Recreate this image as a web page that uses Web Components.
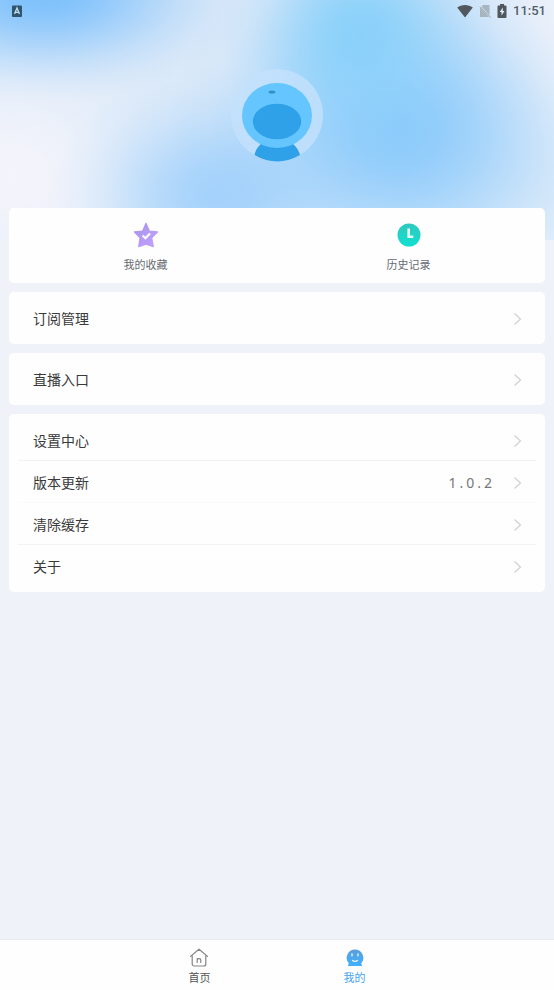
<!DOCTYPE html>
<html lang="zh-CN">
<head>
<meta charset="utf-8">
<meta name="viewport" content="width=device-width, initial-scale=1">
<title>我的</title>
<style>
  body { margin: 0; font-family: "Noto Sans", "Noto Sans CJK SC", sans-serif; color: #3c3c3c; }
</style>
</head>
<body>
<mine-page>
  <status-bar slot="status" time="11:51"></status-bar>
  <user-avatar slot="avatar"></user-avatar>
  <menu-card class="shortcuts">
    <shortcut-item label="我的收藏">
      <svg width="26" height="26" viewBox="0 0 26 26" aria-hidden="true">
        <defs><linearGradient id="sg" x1="0" y1="0" x2="1" y2="1"><stop offset="0" stop-color="#a695e8"/><stop offset="1" stop-color="#c3a0ff"/></linearGradient></defs>
        <path d="M13 1.5 16.4 9.2 24.5 10 18.6 15.7 20.2 24.5 13 22 5.8 24.5 7.2 15.7 1.5 10 9.6 9.2Z" fill="url(#sg)" stroke="url(#sg)" stroke-width="1.4" stroke-linejoin="round"/>
        <path d="m9.600 13.500 2.800 2.700 4.600-4.800" fill="none" stroke="#fff" stroke-width="2.200"/>
      </svg>
    </shortcut-item>
    <shortcut-item label="历史记录">
      <svg width="26" height="26" viewBox="0 0 26 26" aria-hidden="true">
        <defs><linearGradient id="hg" x1="0" y1="0" x2="0" y2="1"><stop offset="0" stop-color="#31c8bf"/><stop offset="1" stop-color="#10e0cf"/></linearGradient></defs>
        <circle cx="13" cy="13" r="11.500" fill="url(#hg)"/>
        <path d="M12.700 6.500v8.200h4.600" fill="none" stroke="#e6fffc" stroke-width="2.600"/>
      </svg>
    </shortcut-item>
  </menu-card>
  <menu-card><menu-row label="订阅管理"></menu-row></menu-card>
  <menu-card><menu-row label="直播入口"></menu-row></menu-card>
  <menu-card>
    <menu-row label="设置中心" divided></menu-row>
    <menu-row label="版本更新" divided="light">1.0.2</menu-row>
    <menu-row label="清除缓存" divided></menu-row>
    <menu-row label="关于"></menu-row>
  </menu-card>
  <tab-bar slot="tabs">
    <tab-item label="首页">
      <svg width="20" height="20" viewBox="0 0 20 20" fill="none" stroke="#858585" stroke-width="1.200" stroke-linejoin="round" stroke-linecap="round" aria-hidden="true">
        <path d="M1.500 8.400 10 1.200l8.500 7.200M3.200 7.500V16a2 2 0 0 0 2 2h9.600a2 2 0 0 0 2-2V7.500"/>
        <path d="M8.200 14.500v-4M8.200 11.500c.6-1.300 3.600-1.300 3.600.5v2.500"/>
      </svg>
    </tab-item>
    <tab-item label="我的" active>
      <svg width="20" height="20" viewBox="0 0 20 20" aria-hidden="true">
        <defs><linearGradient id="mg" x1="0" y1="0" x2="0" y2="1"><stop offset="0" stop-color="#5b9fd9"/><stop offset="1" stop-color="#3fb0ff"/></linearGradient></defs>
        <path d="M10 1.500a8.300 8.300 0 0 1 6.200 13.800l1 2.700H2.800l1-2.700A8.300 8.300 0 0 1 10 1.500Z" fill="url(#mg)"/>
        <path d="M7 6v1.800M13 6v1.800M7.600 12.500c1 1.200 3.800 1.200 4.800 0" fill="none" stroke="#e9f6ff" stroke-width="1.400" stroke-linecap="round"/>
      </svg>
    </tab-item>
  </tab-bar>
</mine-page>

<script>
const define = (name, html) => customElements.define(name, class extends HTMLElement {
  connectedCallback() {
    if (this.shadowRoot) return;
    const root = this.attachShadow({ mode: 'open' });
    root.innerHTML = html;
    root.querySelectorAll('[data-text]').forEach(n => {
      n.textContent = this.getAttribute(n.dataset.text) || '';
    });
  }
});

// A soft colour spot whose opacity falls off along a bell curve.
const spot = (place, color) =>
  `radial-gradient(ellipse ${place}, ${[['ff', 0], ['e6', 18], ['b4', 34], ['78', 50], ['40', 66], ['18', 82], ['00', 100]]
    .map(([alpha, at]) => `${color}${alpha} ${at}%`).join(', ')})`;

define('mine-page', `
  <style>
    :host {
      display: flex; flex-direction: column; min-height: 100vh;
      background:
        ${spot('38% 110px at 8% -8px', '#7cc0fc')},
        ${spot('25% 150px at 65% 35px', '#8ad1fa')},
        ${spot('42% 200px at 72% 130px', '#8ccafb')},
        ${spot('30% 130px at 39% 195px', '#a5d2fb')},
        ${spot('34% 160px at 2% 175px', '#f4f4fb')},
        ${spot('30% 180px at 102% 50px', '#f4f4fa')},
        linear-gradient(#dce9f8, #deebf9 170px, #e4eefa);
      background-size: 100% 240px;
      background-repeat: no-repeat;
      background-color: #eff3f9;
    }
    header { display: grid; justify-items: center; }
    main { flex: 1; display: flex; flex-direction: column; gap: 9px; padding: 0 9px 24px; }
  </style>
  <slot name="status"></slot>
  <header><slot name="avatar"></slot></header>
  <main><slot></slot></main>
  <slot name="tabs"></slot>`);

define('status-bar', `
  <style>
    :host { display: flex; align-items: center; gap: 6px; height: 22px; padding: 0 8px 0 11px;
      font: 500 13px/22px Roboto, sans-serif; color: #53606c; }
    .space { flex: 1; }
    svg { display: block; }
  </style>
  <svg width="12" height="14" viewBox="0 0 12 14" aria-hidden="true"><rect x="1" y="1.500" width="10" height="11.500" rx="1" fill="#2f566f"/><path d="m3.500 10 2.500-6 2.500 6M4.400 8.300h3.200" fill="none" stroke="#c3def2" stroke-width="1.300"/></svg>
  <span class="space"></span>
  <svg width="16" height="16" viewBox="0 0 16 16" aria-hidden="true"><path d="M.2 4.500C4.500 1 11.500 1 15.800 4.500L8 14.500Z" fill="#50575d"/></svg>
  <svg width="12" height="16" viewBox="0 0 12 16" aria-hidden="true"><path d="M4 2h6.500v12H1V5Z" fill="#a9b5be"/><path d="m0 2 11.500 12.500" stroke="#d8e9f7" stroke-width="1.500"/><path d="m.8 3.500 11 11.200" stroke="#99a7b2"/></svg>
  <svg width="10" height="16" viewBox="0 0 10 16" aria-hidden="true"><path d="M3 1h4v1.500h1.500q1 0 1 1V14q0 1-1 1h-7q-1 0-1-1V3.500q0-1 1-1H3Z" fill="#50575d"/><path d="M5.800 4.500 2.700 9h1.800v3.500L7.500 8H5.800Z" fill="#e2eef8"/></svg>
  <time data-text="time"></time>`);

define('user-avatar', `
  <style>
    :host { display: block; padding: 46px 0; }
    svg { display: block; }
  </style>
  <svg width="94" height="94" viewBox="0 0 94 94" role="img" aria-label="头像">
    <circle cx="47" cy="47" r="46" fill="#c4e1fc" fill-opacity=".8"/>
    <path d="M31 76Q26 80 24.500 87Q47 100 70 87Q68 80 63 76Z" fill="#2fa1e9"/>
    <ellipse cx="47" cy="47.500" rx="35" ry="32.500" fill="#65c5ff"/>
    <ellipse cx="47" cy="53.500" rx="24.200" ry="17.800" fill="#2fa1e9"/>
    <ellipse cx="42" cy="24" rx="3.400" ry="1.500" fill="#3190c8"/>
  </svg>`);

define('menu-card', `
  <style>
    :host { display: block; padding: 5px 9px; border-radius: 5px; background: #fefefe; }
    :host(.shortcuts) { display: grid; grid-template-columns: 1fr 1fr; padding: 14px 5px 9px; }
  </style>
  <slot></slot>`);

define('shortcut-item', `
  <style>
    :host { display: grid; }
    button { display: flex; flex-direction: column; align-items: center; gap: 8px; padding: 0;
      border: 0; background: none; font: inherit; font-size: 11px; line-height: 18px; color: #666a72; cursor: pointer; }
    ::slotted(svg) { display: block; }
  </style>
  <button type="button"><slot></slot><span data-text="label"></span></button>`);

define('menu-row', `
  <style>
    :host { display: block; }
    button { box-sizing: border-box; display: flex; align-items: center; gap: 18px; width: 100%; height: 42px;
      padding: 2px 14px 0 15px; border: 0; border-bottom: 1px solid transparent; background: none;
      font: inherit; font-size: 14px; line-height: 20px; color: #3a3a3a; text-align: left; cursor: pointer; }
    :host([divided]) button { border-color: #f2f2f2; }
    :host([divided="light"]) button { border-color: #fafafa; }
    .label { flex: 1; }
    .value { color: #777; letter-spacing: 3px; }
    svg { display: block; }
  </style>
  <button type="button">
    <span class="label" data-text="label"></span>
    <span class="value"><slot></slot></span>
    <svg width="9" height="14" viewBox="0 0 9 14" aria-hidden="true"><path d="m1.500 1.500 6 5.500-6 5.500" fill="none" stroke="#d0d0d0" stroke-width="1.200"/></svg>
  </button>`);

define('tab-bar', `
  <style>
    :host { display: block; background: #fefefe; border-top: 1px solid #e9edf2; }
    nav { display: grid; grid-template-columns: 1fr 1fr; padding: 0 22%; }
  </style>
  <nav><slot></slot></nav>`);

define('tab-item', `
  <style>
    :host { display: grid; }
    a { display: flex; flex-direction: column; align-items: center; gap: 1px; padding: 8px 0 3px;
      font-size: 11px; line-height: 18px; color: #555; text-decoration: none; }
    :host([active]) a { color: #45a5ee; }
    ::slotted(svg) { display: block; }
  </style>
  <a href="#"><slot></slot><span data-text="label"></span></a>`);
</script>
</body>
</html>
